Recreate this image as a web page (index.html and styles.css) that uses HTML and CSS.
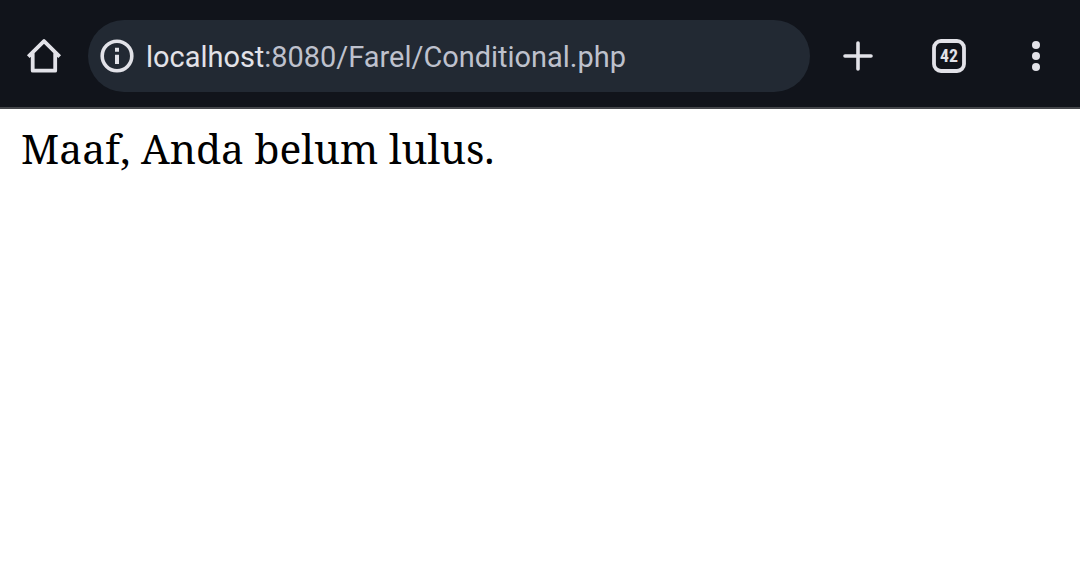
FILE: index.html
```html
<!DOCTYPE html>
<html lang="id">
<head>
<meta charset="utf-8">
<title>localhost:8080/Farel/Conditional.php</title>
<link rel="stylesheet" href="styles.css">
</head>
<body>
<header class="toolbar">
  <svg class="icon home" viewBox="0 0 40 40" aria-label="Home"><path d="M4.3 20.6 20 5.1 35.7 20.6M8.7 17V34.7H31.2V17"/></svg>
  <div class="address">
    <svg class="icon info" viewBox="0 0 40 40"><circle cx="20" cy="20" r="14.8"/><path class="solid" d="M18 11.7h4v4h-4zM18 18.7h4v9.3h-4z"/></svg>
    <span class="url"><span class="host">localhost</span>:8080/Farel/Conditional.php</span>
  </div>
  <svg class="icon plus" viewBox="0 0 40 40" aria-label="New tab"><path d="M20 7V33M7 20H33"/></svg>
  <svg class="icon tabs" viewBox="0 0 40 40" aria-label="Tabs"><rect x="5" y="5" width="30" height="30" rx="7"/><text class="count" x="20" y="26.4" textLength="18" lengthAdjust="spacingAndGlyphs">42</text></svg>
  <svg class="icon menu" viewBox="0 0 40 40" aria-label="Menu"><circle cx="20" cy="9" r="4"/><circle cx="20" cy="20" r="4"/><circle cx="20" cy="31" r="4"/></svg>
</header>
<main class="page">Maaf, Anda belum lulus.</main>
</body>
</html>
```
FILE: styles.css
```css
body { margin: 0; background: #fff; overflow: hidden; }
.toolbar {
  box-sizing: border-box;
  height: 109px;
  display: flex;
  align-items: center;
  padding: 5px 24px 0;
  border-bottom: 2px solid #45474b;
  background: #11141b;
}
.icon { width: 40px; height: 40px; flex: none; fill: none; stroke: #e2e2e8; stroke-width: 3.8; stroke-linejoin: round; }
.info { stroke-width: 3.6; }
.solid { fill: #e2e2e8; stroke: none; }
.address {
  box-sizing: border-box;
  width: 722px;
  height: 72px;
  margin-left: 24px;
  padding-left: 9px;
  display: flex;
  align-items: center;
  border-radius: 36px;
  background: #222933;
}
.url { margin-left: 9px; padding-top: 2px; font: 28.95px/36px Roboto, sans-serif; color: #bec1cd; white-space: nowrap; }
.host { color: #e2e2e8; }
.plus { margin-left: 28px; stroke-width: 3.6; stroke-linecap: round; }
.tabs { margin-left: 51px; }
.count { font: bold 18.6px "Roboto Condensed", Roboto, sans-serif; fill: #e2e2e8; stroke: none; text-anchor: middle; }
.menu { margin-left: 47px; fill: #e2e2e8; stroke: none; }
.page { padding: 11px 21px; font: 40.75px/56px "Noto Serif", "DejaVu Serif Condensed", "DejaVu Serif", serif; color: #000; white-space: nowrap; }
```
